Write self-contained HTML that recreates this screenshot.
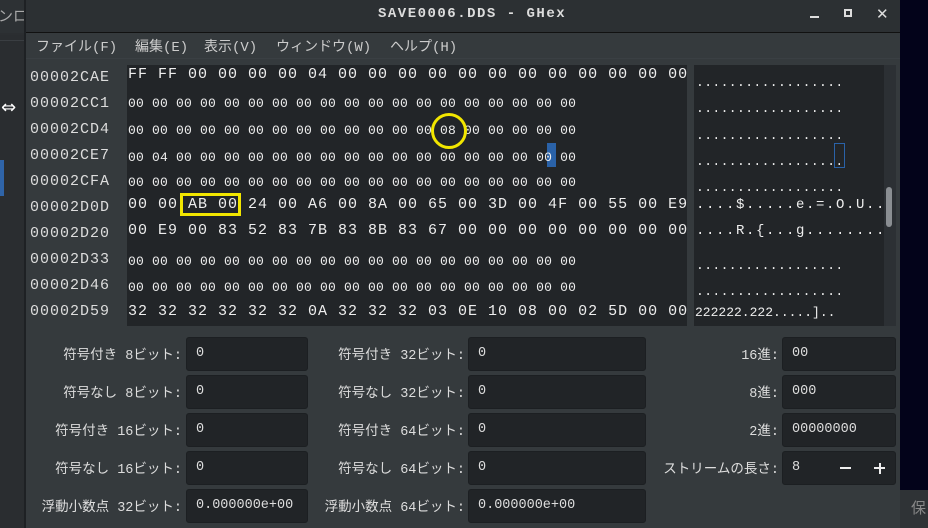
<!DOCTYPE html>
<html><head><meta charset="utf-8"><style>
*{margin:0;padding:0;box-sizing:border-box}
body{width:928px;height:528px;overflow:hidden;background:#2b2e31;position:relative;font-family:"Liberation Mono","Noto Sans CJK JP",monospace;color:#eee}
.a{position:absolute;white-space:pre}
.w{font-size:15px;letter-spacing:1px;line-height:18px}
.n{font-size:13px;letter-spacing:0.2px;line-height:16px}
.lbl{position:absolute;font-family:"Liberation Mono","Noto Sans CJK JP",monospace;font-size:13.5px;color:#ddd;text-align:right;white-space:nowrap}
.inp{position:absolute;background:#212427;border:1px solid #1c1f22;border-radius:3px;font-size:13.5px;color:#ddd;padding-left:9px;line-height:31px;font-family:"Liberation Mono",monospace}
</style></head><body>
<!-- left background app -->
<div class="a" style="left:0;top:0;width:25px;height:33px;background:#2d3134"></div>
<div class="a" style="left:-2px;top:5px;font-family:'Noto Sans CJK JP',sans-serif;font-size:15px;color:#aaa">ンロ</div>
<div class="a" style="left:0;top:35px;width:25px;height:493px;background:#2a2d30"></div>
<div class="a" style="left:0;top:40px;width:25px;height:1px;background:#3a3e42"></div>
<div class="a" style="left:0;top:160px;width:4px;height:36px;background:#2f64a8"></div>
<div class="a" style="left:24px;top:0;width:2px;height:528px;background:#1e2124"></div>
<div class="a" style="left:1px;top:97px;font-size:18px;color:#fff;font-family:'DejaVu Sans',sans-serif">⇔</div>
<!-- right strip -->
<div class="a" style="left:900px;top:0;width:28px;height:490px;background:#03031a"></div>
<div class="a" style="left:900px;top:490px;width:28px;height:38px;background:#2f3336"></div>
<div class="a" style="left:911px;top:497px;font-family:'Noto Sans CJK JP',sans-serif;font-size:15px;color:#888">保</div>
<!-- window -->
<div class="a" style="left:26px;top:0;width:874px;height:32px;background:#2c3033"></div>
<div class="a" style="left:26px;top:32px;width:874px;height:1px;background:#111"></div>
<div class="a" style="left:26px;top:33px;width:874px;height:495px;background:#353a3d"></div>
<div class="a" style="left:378px;top:6px;font-size:14px;font-weight:bold;letter-spacing:1.5px;color:#ddd">SAVE0006.DDS - GHex</div>
<div class="a" style="left:810px;top:16px;width:9px;height:2px;background:#ddd"></div>
<div class="a" style="left:844px;top:9px;width:8px;height:8px;border:2px solid #ddd"></div>
<div class="a" style="left:876px;top:5px;font-size:15px;font-weight:bold;color:#ddd;font-family:'DejaVu Sans',sans-serif">✕</div>
<!-- menu -->
<div class="lbl" style="left:36px;top:36px;text-align:left;font-size:14px;color:#ccc">ファイル(F)</div>
<div class="lbl" style="left:135px;top:36px;text-align:left;font-size:14px;color:#ccc">編集(E)</div>
<div class="lbl" style="left:204px;top:36px;text-align:left;font-size:14px;color:#ccc">表示(V)</div>
<div class="lbl" style="left:276px;top:36px;text-align:left;font-size:14px;color:#ccc">ウィンドウ(W)</div>
<div class="lbl" style="left:390px;top:36px;text-align:left;font-size:14px;color:#ccc">ヘルプ(H)</div>
<div class="a" style="left:26px;top:58px;width:874px;height:1px;background:#3a3f43"></div>
<!-- panels -->
<div class="a" style="left:127px;top:65px;width:560px;height:261px;background:#222528"></div>
<div class="a" style="left:694px;top:65px;width:190px;height:261px;background:#222528"></div>
<div class="a" style="left:884px;top:65px;width:12px;height:261px;background:#2c3034"></div>
<div class="a" style="left:886px;top:187px;width:6px;height:40px;background:#8a8e92;border-radius:3px"></div>
<!-- offsets -->
<div class="a w" style="left:30px;top:65px;color:#ddd;line-height:26px">00002CAE
00002CC1
00002CD4
00002CE7
00002CFA
00002D0D
00002D20
00002D33
00002D46
00002D59</div>
<!-- hex -->
<div class="a w" style="left:128px;top:66px">FF FF 00 00 00 00 04 00 00 00 00 00 00 00 00 00 00 00 00</div>
<div class="a n" style="left:128px;top:96px">00 00 00 00 00 00 00 00 00 00 00 00 00 00 00 00 00 00 00</div>
<div class="a n" style="left:128px;top:123px">00 00 00 00 00 00 00 00 00 00 00 00 00 08 00 00 00 00 00</div>
<div class="a" style="left:547px;top:143px;width:9px;height:24px;background:#2a62a8"></div>
<div class="a n" style="left:128px;top:150px">00 04 00 00 00 00 00 00 00 00 00 00 00 00 00 00 00 00 00</div>
<div class="a n" style="left:128px;top:175px">00 00 00 00 00 00 00 00 00 00 00 00 00 00 00 00 00 00 00</div>
<div class="a w" style="left:128px;top:196px">00 00 AB 00 24 00 A6 00 8A 00 65 00 3D 00 4F 00 55 00 E9</div>
<div class="a w" style="left:128px;top:222px">00 E9 00 83 52 83 7B 83 8B 83 67 00 00 00 00 00 00 00 00</div>
<div class="a n" style="left:128px;top:254px">00 00 00 00 00 00 00 00 00 00 00 00 00 00 00 00 00 00 00</div>
<div class="a n" style="left:128px;top:280px">00 00 00 00 00 00 00 00 00 00 00 00 00 00 00 00 00 00 00</div>
<div class="a w" style="left:128px;top:303px">32 32 32 32 32 32 0A 32 32 32 03 0E 10 08 00 02 5D 00 00</div>
<!-- ascii -->
<div class="a n" style="left:696px;top:70px;letter-spacing:0.4px;line-height:26.3px">..................
..................
..................
..................
..................</div>
<div class="a" style="left:834px;top:143px;width:11px;height:25px;border:1px solid #2a62a8"></div>
<div class="a w" style="left:696px;top:196px;font-size:14px;letter-spacing:1.6px">....$.....e.=.O.U..</div>
<div class="a w" style="left:696px;top:222px;font-size:14px;letter-spacing:1.6px">....R.{...g........</div>
<div class="a n" style="left:696px;top:253px;letter-spacing:0.4px;line-height:26px">..................
..................</div>
<div class="a n" style="left:695px;top:305px;font-size:13px;letter-spacing:0px">222222.222.....]..</div>
<!-- annotations -->
<div class="a" style="left:431px;top:113px;width:36px;height:36px;border:3px solid #f2e600;border-radius:50%"></div>
<div class="a" style="left:180px;top:193px;width:61px;height:23px;border:3px solid #f2e600"></div>
<!-- bottom labels -->
<div class="lbl" style="right:746px;top:343px">符号付き 8ビット:</div>
<div class="lbl" style="right:746px;top:381px">符号なし 8ビット:</div>
<div class="lbl" style="right:746px;top:419px">符号付き 16ビット:</div>
<div class="lbl" style="right:746px;top:457px">符号なし 16ビット:</div>
<div class="lbl" style="right:746px;top:495px">浮動小数点 32ビット:</div>
<div class="inp" style="left:186px;top:337px;width:122px;height:34px">0</div>
<div class="inp" style="left:186px;top:375px;width:122px;height:34px">0</div>
<div class="inp" style="left:186px;top:413px;width:122px;height:34px">0</div>
<div class="inp" style="left:186px;top:451px;width:122px;height:34px">0</div>
<div class="inp" style="left:186px;top:489px;width:122px;height:34px">0.000000e+00</div>
<div class="lbl" style="right:463px;top:343px">符号付き 32ビット:</div>
<div class="lbl" style="right:463px;top:381px">符号なし 32ビット:</div>
<div class="lbl" style="right:463px;top:419px">符号付き 64ビット:</div>
<div class="lbl" style="right:463px;top:457px">符号なし 64ビット:</div>
<div class="lbl" style="right:463px;top:495px">浮動小数点 64ビット:</div>
<div class="inp" style="left:468px;top:337px;width:178px;height:34px">0</div>
<div class="inp" style="left:468px;top:375px;width:178px;height:34px">0</div>
<div class="inp" style="left:468px;top:413px;width:178px;height:34px">0</div>
<div class="inp" style="left:468px;top:451px;width:178px;height:34px">0</div>
<div class="inp" style="left:468px;top:489px;width:178px;height:34px">0.000000e+00</div>
<div class="lbl" style="right:149px;top:343px">16進:</div>
<div class="lbl" style="right:149px;top:381px">8進:</div>
<div class="lbl" style="right:149px;top:419px">2進:</div>
<div class="lbl" style="right:149px;top:457px">ストリームの長さ:</div>
<div class="inp" style="left:782px;top:337px;width:114px;height:34px">00</div>
<div class="inp" style="left:782px;top:375px;width:114px;height:34px">000</div>
<div class="inp" style="left:782px;top:413px;width:114px;height:34px">00000000</div>
<div class="inp" style="left:782px;top:451px;width:114px;height:34px">8</div>
<div class="a" style="left:840px;top:467px;width:11px;height:2px;background:#eee"></div>
<div class="a" style="left:874px;top:467px;width:11px;height:2px;background:#eee"></div>
<div class="a" style="left:878.5px;top:462.5px;width:2px;height:11px;background:#eee"></div>
</body></html>
